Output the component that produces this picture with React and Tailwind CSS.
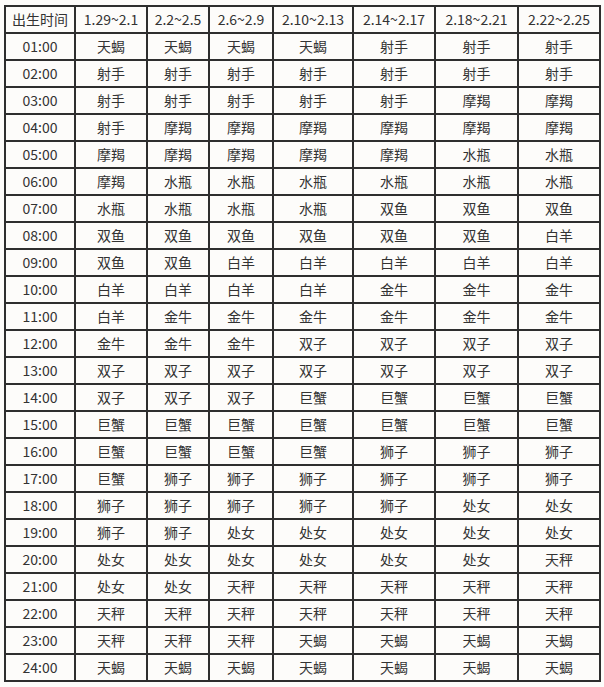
const headers = ["出生时间", "1.29~2.1", "2.2~2.5", "2.6~2.9", "2.10~2.13", "2.14~2.17", "2.18~2.21", "2.22~2.25"];

const rows = [
  "天蝎 天蝎 天蝎 天蝎 射手 射手 射手",
  "射手 射手 射手 射手 射手 射手 射手",
  "射手 射手 射手 射手 射手 摩羯 摩羯",
  "射手 摩羯 摩羯 摩羯 摩羯 摩羯 摩羯",
  "摩羯 摩羯 摩羯 摩羯 摩羯 水瓶 水瓶",
  "摩羯 水瓶 水瓶 水瓶 水瓶 水瓶 水瓶",
  "水瓶 水瓶 水瓶 水瓶 双鱼 双鱼 双鱼",
  "双鱼 双鱼 双鱼 双鱼 双鱼 双鱼 白羊",
  "双鱼 双鱼 白羊 白羊 白羊 白羊 白羊",
  "白羊 白羊 白羊 白羊 金牛 金牛 金牛",
  "白羊 金牛 金牛 金牛 金牛 金牛 金牛",
  "金牛 金牛 金牛 双子 双子 双子 双子",
  "双子 双子 双子 双子 双子 双子 双子",
  "双子 双子 双子 巨蟹 巨蟹 巨蟹 巨蟹",
  "巨蟹 巨蟹 巨蟹 巨蟹 巨蟹 巨蟹 巨蟹",
  "巨蟹 巨蟹 巨蟹 巨蟹 狮子 狮子 狮子",
  "巨蟹 狮子 狮子 狮子 狮子 狮子 狮子",
  "狮子 狮子 狮子 狮子 狮子 处女 处女",
  "狮子 狮子 处女 处女 处女 处女 处女",
  "处女 处女 处女 处女 处女 处女 天秤",
  "处女 处女 天秤 天秤 天秤 天秤 天秤",
  "天秤 天秤 天秤 天秤 天秤 天秤 天秤",
  "天秤 天秤 天秤 天蝎 天蝎 天蝎 天蝎",
  "天蝎 天蝎 天蝎 天蝎 天蝎 天蝎 天蝎",
].map((r) => r.split(" "));

function Cell({ children }) {
  return (
    <div className="h-[27px] flex items-center justify-center border-r-2 border-b-2 border-[#2e2e2e] text-[14px] text-[#333]">
      {children}
    </div>
  );
}

export default function App() {
  return (
    <div
      className="w-[604px] h-[687px] bg-[#fdfcfa] pt-[5px] pl-[4px]"
      style={{ fontFamily: '"Noto Sans CJK SC", "Noto Sans", sans-serif' }}>
      <div className="w-[597px] grid grid-cols-[70px_72px_62px_64px_80px_82px_83px_82px] border-t-2 border-l-2 border-[#2e2e2e]">
        {headers.map((h) => (
          <Cell key={h}>{h}</Cell>
        ))}
        {rows.map((r, i) => (
          <div key={i} className="contents">
            <Cell>{String(i + 1).padStart(2, "0") + ":00"}</Cell>
            {r.map((s, j) => (
              <Cell key={j}>{s}</Cell>
            ))}
          </div>
        ))}
      </div>
    </div>
  );
}
